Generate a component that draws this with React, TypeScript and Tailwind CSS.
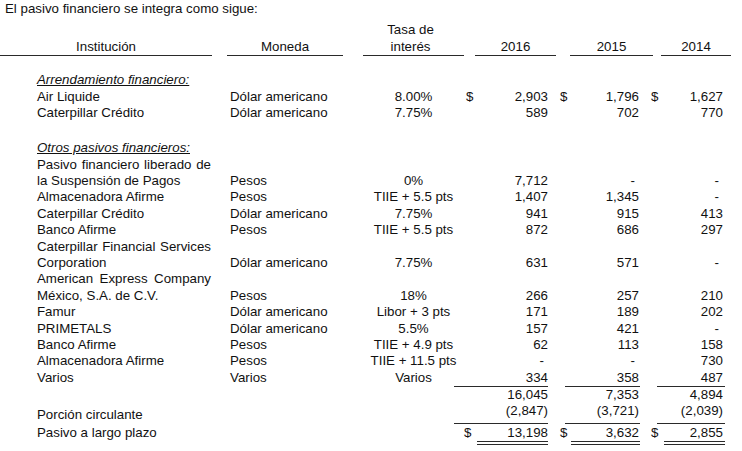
type R = {
  label: string;
  mon?: string;
  tasa?: string;
  a?: string;
  b?: string;
  c?: string;
  just?: boolean;
  dollar?: boolean;
};

const G = "grid grid-cols-[227px_136px_101px_92px_97px_78px] h-[16.4px]";

const arrendamiento: R[] = [
  { label: "Air Liquide", mon: "Dólar americano", tasa: "8.00%", a: "2,903", b: "1,796", c: "1,627", dollar: true },
  { label: "Caterpillar Crédito", mon: "Dólar americano", tasa: "7.75%", a: "589", b: "702", c: "770" },
];

const otros: R[] = [
  { label: "Pasivo financiero liberado de", just: true },
  { label: "la Suspensión de Pagos", mon: "Pesos", tasa: "0%", a: "7,712", b: "-", c: "-" },
  { label: "Almacenadora Afirme", mon: "Pesos", tasa: "TIIE + 5.5 pts", a: "1,407", b: "1,345", c: "-" },
  { label: "Caterpillar Crédito", mon: "Dólar americano", tasa: "7.75%", a: "941", b: "915", c: "413" },
  { label: "Banco Afirme", mon: "Pesos", tasa: "TIIE + 5.5 pts", a: "872", b: "686", c: "297" },
  { label: "Caterpillar Financial Services", just: true },
  { label: "Corporation", mon: "Dólar americano", tasa: "7.75%", a: "631", b: "571", c: "-" },
  { label: "American Express Company", just: true },
  { label: "México, S.A. de C.V.", mon: "Pesos", tasa: "18%", a: "266", b: "257", c: "210" },
  { label: "Famur", mon: "Dólar americano", tasa: "Libor + 3 pts", a: "171", b: "189", c: "202" },
  { label: "PRIMETALS", mon: "Dólar americano", tasa: "5.5%", a: "157", b: "421", c: "-" },
  { label: "Banco Afirme", mon: "Pesos", tasa: "TIIE + 4.9 pts", a: "62", b: "113", c: "158" },
  { label: "Almacenadora Afirme", mon: "Pesos", tasa: "TIIE + 11.5 pts", a: "-", b: "-", c: "730" },
  { label: "Varios", mon: "Varios", tasa: "Varios", a: "334", b: "358", c: "487" },
];

function Num({ v }: { v?: string }) {
  return <span className={v === "-" ? "pr-[4px]" : ""}>{v}</span>;
}

function Row({ r }: { r: R }) {
  return (
    <div className={G}>
      {r.just ? (
        <div className="pl-[37px]">
          <div className="w-[174px] [text-align-last:justify]">{r.label}</div>
        </div>
      ) : (
        <div className="pl-[37px] whitespace-nowrap">{r.label}</div>
      )}
      <div className="pl-[3px] whitespace-nowrap">{r.mon}</div>
      <div className="text-center whitespace-nowrap">{r.tasa}</div>
      <div className="flex justify-between pl-[2px] pr-[8px]">
        <span>{r.dollar ? "$" : ""}</span>
        <Num v={r.a} />
      </div>
      <div className="flex justify-between pl-[4px] pr-[14px]">
        <span>{r.dollar ? "$" : ""}</span>
        <Num v={r.b} />
      </div>
      <div className="flex justify-between ml-[-2px] pr-[8px]">
        <span>{r.dollar ? "$" : ""}</span>
        <Num v={r.c} />
      </div>
    </div>
  );
}

export default function App() {
  return (
    <div className="w-[742px] h-[451px] overflow-hidden bg-white text-[#111111] font-['Liberation_Sans',Arial,sans-serif] text-[13.3px] leading-[16.4px]">
      <div className="pl-[5px] pt-[1px]">El pasivo financiero se integra como sigue:</div>

      {/* encabezados */}
      <div className="grid grid-cols-[227px_136px_101px_92px_97px_78px] items-end mt-[5px]">
        <div className="mr-[15px] border-b border-[#2a2a2a] text-center">Institución</div>
        <div className="mr-[20px] border-b border-[#2a2a2a] text-center">Moneda</div>
        <div className="border-b border-[#2a2a2a] text-center pr-[6px]">
          Tasa de
          <br />
          interés
        </div>
        <div className="ml-[11px] border-b border-[#2a2a2a] text-center">2016</div>
        <div className="ml-[14px] border-b border-[#2a2a2a] text-center">2015</div>
        <div className="ml-[8px] border-b border-[#2a2a2a] text-center pt-[2px]">2014</div>
      </div>

      <div className="mt-[16px] pl-[37px] italic underline">Arrendamiento financiero:</div>
      {arrendamiento.map((r, i) => (
        <Row key={i} r={r} />
      ))}

      <div className="mt-[18.8px] pl-[37px] italic underline">Otros pasivos financieros:</div>
      {otros.map((r, i) => (
        <Row key={i} r={r} />
      ))}

      {/* subtotal */}
      <div className="grid grid-cols-[227px_136px_101px_92px_97px_78px]">
        <div />
        <div />
        <div />
        <div className="ml-[-10px] mr-[8px] border-t border-[#2a2a2a] text-right">16,045</div>
        <div className="ml-[9px] mr-[13px] border-t border-[#2a2a2a] text-right pr-[1px]">7,353</div>
        <div className="ml-[4px] mr-[6px] border-t border-[#2a2a2a] text-right pr-[2px]">4,894</div>
      </div>

      <div className="grid grid-cols-[227px_136px_101px_92px_97px_78px]">
        <div className="pl-[37px] pt-[4px] whitespace-nowrap">Porción circulante</div>
        <div />
        <div />
        <div className="ml-[-10px] mr-[8px] border-b border-[#2a2a2a] text-right">(2,847)</div>
        <div className="ml-[9px] mr-[13px] border-b border-[#2a2a2a] text-right pr-[1px]">(3,721)</div>
        <div className="ml-[4px] mr-[6px] border-b border-[#2a2a2a] text-right pr-[2px]">(2,039)</div>
      </div>

      <div className="grid grid-cols-[227px_136px_101px_92px_97px_78px] mt-[1px]">
        <div className="pl-[37px] whitespace-nowrap">Pasivo a largo plazo</div>
        <div />
        <div />
        <div className="flex pr-[8px]">
          <span>$</span>
          <span className="flex-1 ml-[6px] text-right border-b-[4px] border-double border-[#2a2a2a]">13,198</span>
        </div>
        <div className="flex pl-[4px] pr-[13px]">
          <span>$</span>
          <span className="flex-1 ml-[4px] text-right border-b-[4px] border-double border-[#2a2a2a] pr-[1px]">3,632</span>
        </div>
        <div className="flex ml-[-2px] pr-[6px]">
          <span>$</span>
          <span className="flex-1 ml-[6px] text-right border-b-[4px] border-double border-[#2a2a2a] pr-[2px]">2,855</span>
        </div>
      </div>
    </div>
  );
}
